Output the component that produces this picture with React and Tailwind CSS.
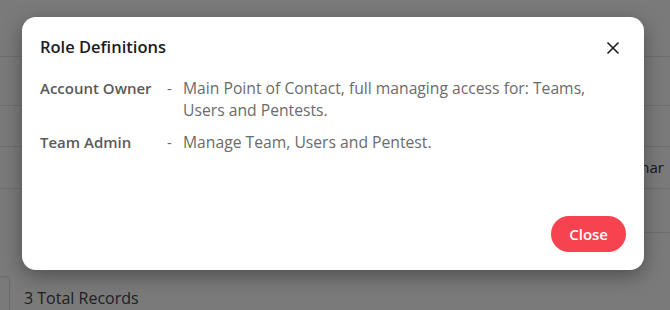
import { X } from 'lucide-react'

const roles = [
  { name: 'Account Owner', desc: 'Main Point of Contact, full managing access for: Teams, Users and Pentests.' },
  { name: 'Team Admin', desc: 'Manage Team, Users and Pentest.' },
]

export default function App() {
  return (
    <div className="relative w-[670px] h-[310px] overflow-hidden bg-white font-['Open_Sans',sans-serif]">
      {/* page behind the overlay */}
      <div className="flex flex-col">
        <div className="h-[57px] border-b border-[#e6e6e6]" />
        <div className="h-[49px] border-b border-[#e6e6e6]" />
        <div className="h-[41px] border-b border-[#e6e6e6]" />
        <div className="h-[42px] border-b border-[#e6e6e6] flex items-center justify-end text-[15px] text-[#333]">
          <span className="mr-[6px]">nar</span>
        </div>
        <div className="h-[44px] border-b border-[#e6e6e6] ml-[640px]" />
        <div className="flex items-center mt-[43px] gap-[13px]">
          <div className="w-[12px] h-[40px] border border-[#ddd] rounded-[4px] -ml-[2px]" />
          <span className="text-[16px] text-[#444] mt-[4px] ml-[1px]">3 Total Records</span>
        </div>
      </div>

      {/* overlay + modal */}
      <div className="absolute inset-0 bg-black/[0.52] flex items-start justify-center pt-[17px]">
        <div className="w-[622px] h-[253px] -ml-[4px] bg-white rounded-[14px] shadow-[0_6px_20px_rgba(0,0,0,0.35)] flex flex-col pl-[18px] pr-[18px]">
          <div className="flex items-center justify-between h-[60px] pt-[1px]">
            <h2 className="text-[16.5px] font-semibold text-[#1c1c1c]">Role Definitions</h2>
            <X size={20} strokeWidth={2} className="text-[#1a1a1a] mr-[3px]" />
          </div>
          <div className="flex flex-col gap-[10px]">
            {roles.map((r) => (
              <div key={r.name} className="flex text-[15px] leading-[22px]">
                <span className="w-[127px] shrink-0 font-semibold text-[#5a5a5a]">{r.name}</span>
                <span className="w-[16px] shrink-0 text-[#6b6b6b]">-</span>
                <span className="w-[420px] text-[15.7px] text-[#6b6b6b]">{r.desc}</span>
              </div>
            ))}
          </div>
          <div className="flex-1" />
          <div className="flex justify-end pb-[18px]">
            <button className="h-[36px] px-[18px] rounded-full bg-[#f6434f] text-white text-[15px] font-semibold">
              Close
            </button>
          </div>
        </div>
      </div>
    </div>
  )
}
